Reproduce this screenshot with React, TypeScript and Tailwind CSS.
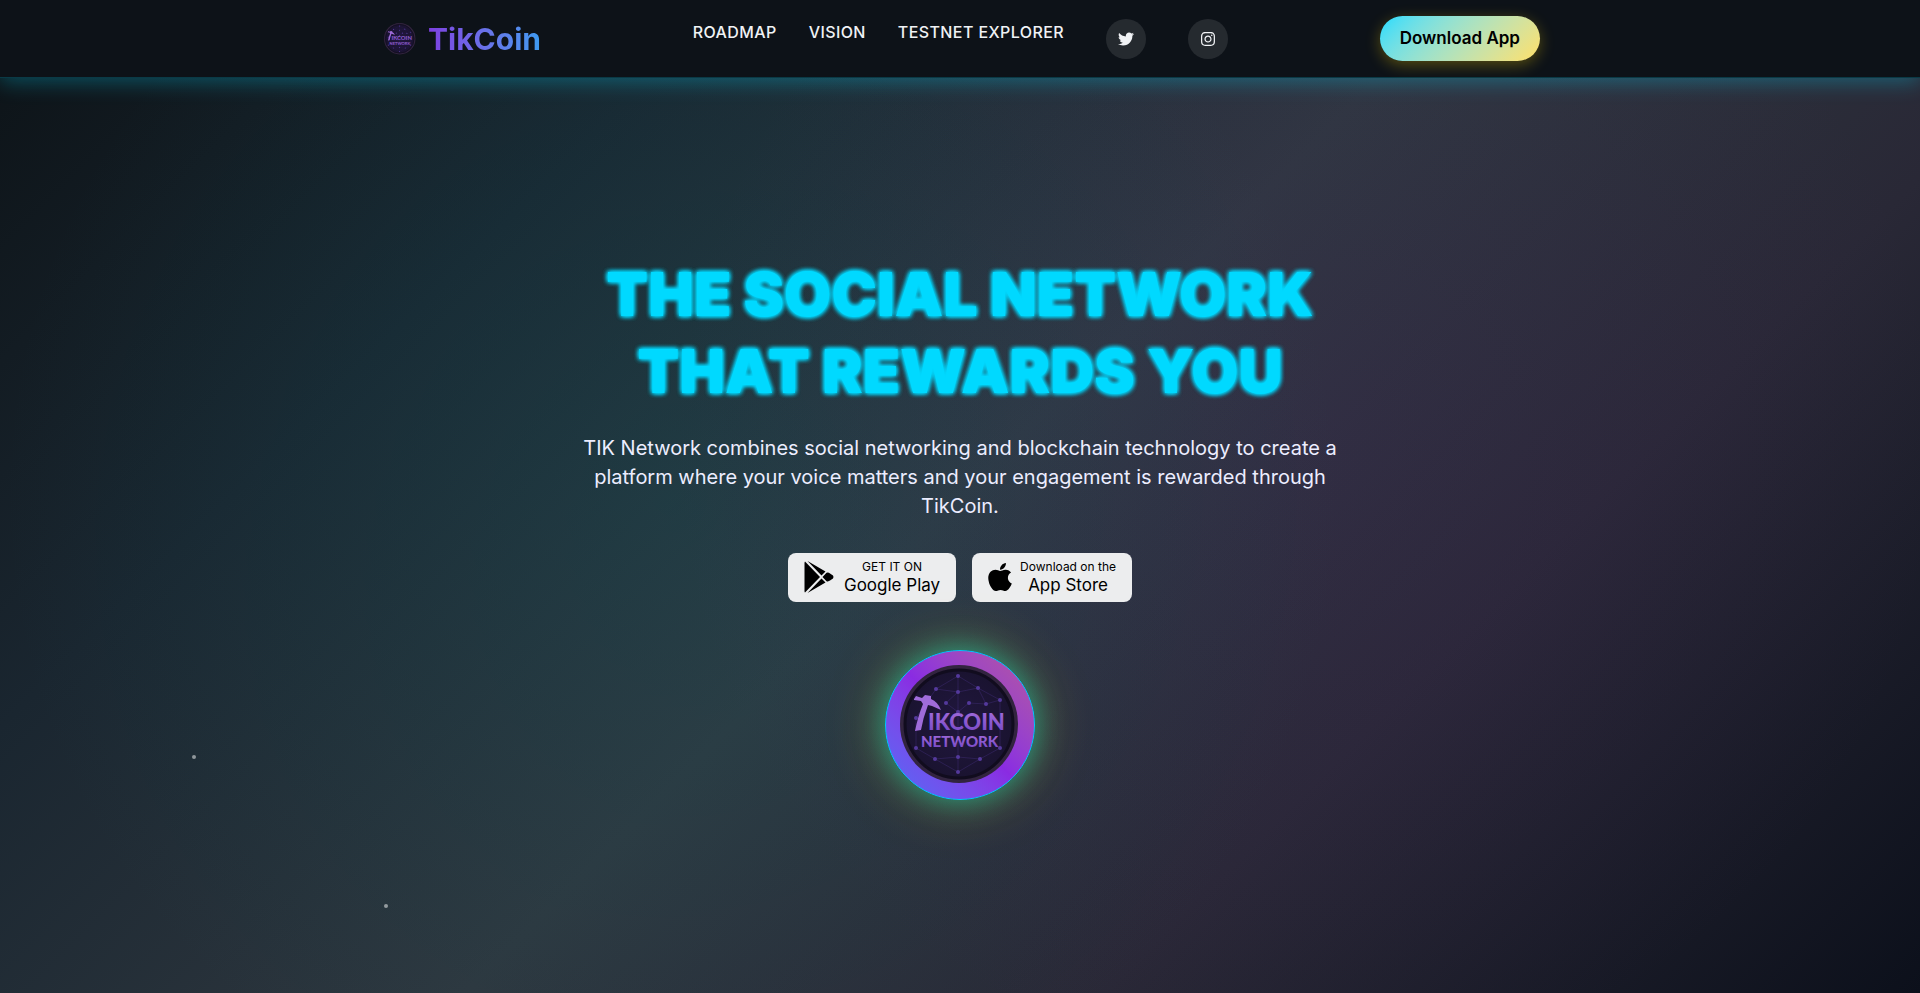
import React from 'react';
import { FaApple, FaInstagram, FaTwitter } from 'react-icons/fa';

const navLinks = [
  { label: 'ROADMAP', href: '#roadmap' },
  { label: 'VISION', href: '#vision' },
  { label: 'TESTNET EXPLORER', href: '#explorer' },
];

const socialLinks = [
  { label: 'Twitter', href: '#twitter', Icon: FaTwitter },
  { label: 'Instagram', href: '#instagram', Icon: FaInstagram },
];

// Network nodes printed on the coin, on a 120x120 grid
const coinNodes = [
  [58, 11], [36, 24], [78, 23], [58, 27], [46, 38], [69, 38], [86, 39], [100, 35],
  [16, 53], [58, 47], [16, 83], [100, 83], [35, 94], [58, 92], [80, 94], [58, 107],
];

function CoinLogo({ className }: { className?: string }) {
  const id = React.useId();

  return (
    <svg viewBox="0 0 120 120" className={className} aria-hidden="true">
      <defs>
        <radialGradient id={`${id}-disc`}>
          <stop offset="0%" stopColor="#21173f" />
          <stop offset="100%" stopColor="#1a1330" />
        </radialGradient>
        <linearGradient id={`${id}-text`} x1="0" y1="0" x2="0" y2="1">
          <stop offset="0%" stopColor="#a56fdc" />
          <stop offset="100%" stopColor="#7446c4" />
        </linearGradient>
      </defs>
      <circle cx="59" cy="59" r="59" fill="#32243f" />
      <circle cx="59" cy="59" r="54" fill={`url(#${id}-disc)`} stroke="#110c1e" strokeWidth="3" />
      <g stroke="#4a348a" strokeWidth="0.6" opacity="0.6" fill="none">
        <path d="M58 11V107M58 11L36 24L58 27L78 23ZM36 24L16 53V83L35 94L58 107L80 94L100 83V35L78 23" />
        <path d="M46 38L58 47L69 38L86 39L100 35M58 27L46 38M78 23L86 39M35 94L58 92L80 94" />
      </g>
      <g fill="#54399c">
        {coinNodes.map(([x, y]) => (
          <circle key={`${x}-${y}`} cx={x} cy={y} r="2" />
        ))}
      </g>
      {/* Pickaxe that stands in for the T */}
      <path
        d="M14 34L16 31L22 33L25 30L31 31L31 34Q38 37 41 45L32 41L28 40Q23 53 21 65L15 66Q18 51 23 39L21 36L14 35Z"
        fill="#a06cda"
      />
      <text x="28" y="65" fontFamily="Lato" fontWeight="900" fontSize="22" fill={`url(#${id}-text)`}>
        IKCOIN
      </text>
      <text x="21" y="82" fontFamily="Lato" fontWeight="900" fontSize="15" fill={`url(#${id}-text)`}>
        NETWORK
      </text>
    </svg>
  );
}

function PlayIcon() {
  return (
    <svg viewBox="0 0 32 32" className="size-8 fill-black" aria-hidden="true">
      <path d="M1 0.5Q0.5 1 0.5 2V30Q0.5 31 1 31.5L16 16ZM3.5 0L17.5 14.5L21.5 10.5ZM3.5 32L17.5 17.5L21.5 21.5ZM22.5 11.8L18.5 16L22.5 20.2Q24.5 20.8 26 19.6L29 17.4Q30 16 29 14.6L26 12.4Q24.5 11.2 22.5 11.8Z" />
    </svg>
  );
}

function Header() {
  return (
    <header className="border-b border-[#00dcff]/20 bg-[#0d1218] shadow-[0_4px_20px_rgba(0,220,255,0.3)]">
      <div className="mx-auto flex max-w-[1200px] items-center justify-between px-5 py-4">
        <a href="#home" className="flex items-center gap-3">
          <CoinLogo className="ml-1 size-8" />
          <span className="bg-linear-to-r from-[#7c3ee0] to-[#3b9af0] bg-clip-text text-[30px] leading-9 font-bold text-transparent">
            TikCoin
          </span>
        </a>
        <nav className="flex items-start gap-8">
          {navLinks.map((link) => (
            <a key={link.label} href={link.href} className="text-base leading-[26px] font-medium tracking-wide">
              {link.label}
            </a>
          ))}
          {socialLinks.map(({ label, href, Icon }) => (
            <a
              key={label}
              href={href}
              aria-label={label}
              className="ml-2.5 flex size-10 items-center justify-center rounded-full bg-white/10"
            >
              <Icon className="size-4" />
            </a>
          ))}
        </nav>
        <button className="rounded-full bg-linear-135 from-[#00dcff] to-[#ffe066] px-5 py-2.5 text-[17px] leading-[25px] font-semibold text-black shadow-[0_4px_15px_rgba(255,215,0,0.3)]">
          Download App
        </button>
      </div>
    </header>
  );
}

function StoreLink({ href, icon, caption, store }: { href: string; icon: React.ReactNode; caption: string; store: string }) {
  return (
    <a href={href} className="flex items-center gap-2 rounded-lg bg-[#ecedee] px-4 py-1.5 text-center text-black">
      {icon}
      <span className="flex flex-col">
        <span className="text-xs leading-4">{caption}</span>
        <span className="text-[17px] leading-[21px]">{store}</span>
      </span>
    </a>
  );
}

function Hero() {
  return (
    <main className="flex grow flex-col items-center justify-center px-5 pb-4 text-center">
      <h1 className="max-w-[800px] text-[61px] leading-[77px] font-black text-[#00d9ff] [text-shadow:0_0_5px_#00d9ff,0_0_5px_#00d9ff,0_0_5px_#00d9ff]">
        THE SOCIAL NETWORK THAT REWARDS YOU
      </h1>
      <p className="mt-6 max-w-[800px] text-xl leading-[29px] text-[#ecedff]">
        TIK Network combines social networking and blockchain technology to create a platform where your voice matters and
        your engagement is rewarded through TikCoin.
      </p>
      <div className="mt-8 flex gap-4">
        <StoreLink href="#google-play" icon={<PlayIcon />} caption="GET IT ON" store="Google Play" />
        <StoreLink href="#app-store" icon={<FaApple className="h-8 w-6" />} caption="Download on the" store="App Store" />
      </div>
      <div className="mt-12 flex size-[150px] items-center justify-center rounded-full border border-[#00c8ff] bg-linear-45 from-[#4a6cf7] via-[#8a2be2] to-[#b8559c] shadow-[0_0_30px_rgba(0,220,190,0.6),0_0_60px_rgba(255,215,0,0.3)]">
        <CoinLogo className="size-[120px]" />
      </div>
    </main>
  );
}

export default function App() {
  return (
    <div className="relative flex min-h-screen flex-col bg-[radial-gradient(circle_at_35%_50%,rgba(0,120,125,0.15)_0%,transparent_50%),radial-gradient(circle_at_68%_45%,rgba(90,30,130,0.12)_0%,transparent_45%),linear-gradient(135deg,#0c1216_0%,#1a2630_25%,#2e373f_50%,#292836_72%,#0c101b_100%)] font-['Inter',sans-serif] text-[#f0f2f5]">
      <Header />
      <Hero />
      <span className="absolute top-[76%] left-[10%] size-1 rounded-full bg-white/50" />
      <span className="absolute top-[91%] left-[20%] size-1 rounded-full bg-white/50" />
    </div>
  );
}
